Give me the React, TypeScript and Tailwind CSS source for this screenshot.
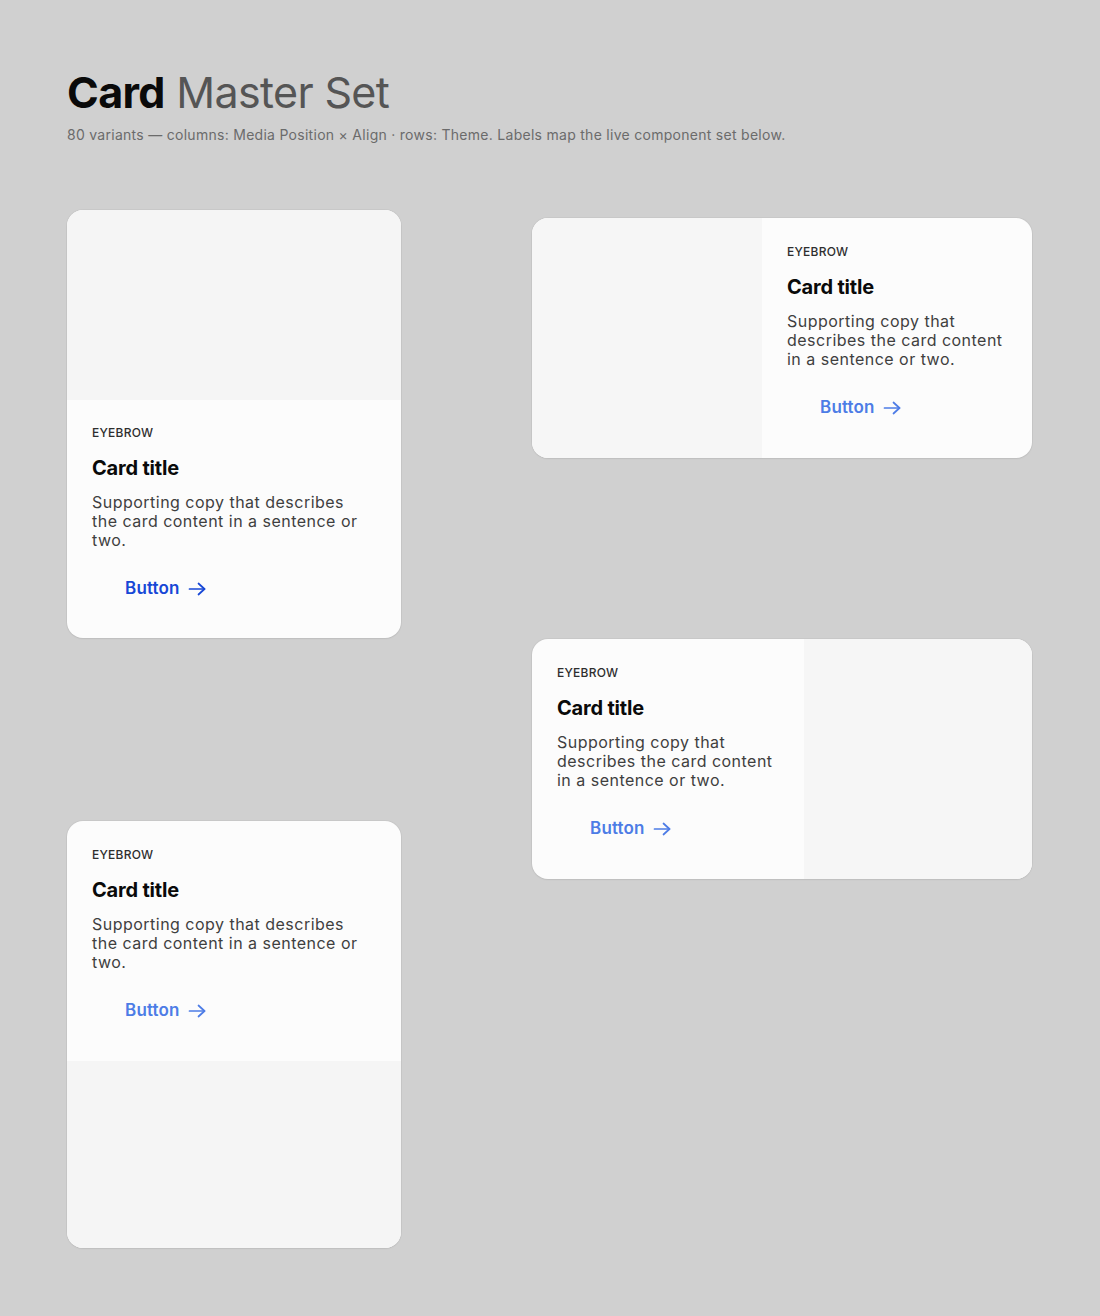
type Media = 'top' | 'bottom' | 'left' | 'right';

interface CardProps {
  media: Media;
  strong?: boolean;
}

const Arrow = () => (
  <svg width="18" height="14" viewBox="0 0 18 14" fill="none" stroke="currentColor" strokeWidth="1.7" strokeLinecap="round" strokeLinejoin="round">
    <path d="M1.5 7h15" />
    <path d="M10.5 1.5 16.5 7l-6 5.5" />
  </svg>
);

const CardBody = ({ strong }: { strong?: boolean }) => {
  return (
    <div className="flex flex-col">
      <p className="text-[12px] leading-4 font-medium tracking-[0.02em] text-[#2e2e2e]">EYEBROW</p>
      <h3 className="mt-[13px] text-[20px] leading-7 font-bold tracking-[-0.01em] text-[#0a0a0a]">
        Card title
      </h3>
      <p className="mt-[11px] text-[16px] leading-[19px] tracking-[0.03em] text-[#3f3f3f]">
        Supporting copy that describes the card content in a sentence or two.
      </p>
      <button
        className={`mt-[19px] self-start flex items-center gap-2 h-10 pl-[33px] pr-4 text-[17px] font-semibold tracking-[0.01em] ${
          strong ? 'text-[#1747d6]' : 'text-[#4d7ce6]'
        }`}
      >
        Button
        <Arrow />
      </button>
    </div>
  );
};

const Card = ({ media, strong }: CardProps) => {
  const vertical = media === 'top' || media === 'bottom';

  if (vertical) {
    return (
      <div className="flex flex-col w-[334px] rounded-2xl overflow-hidden bg-[#fcfcfc] shadow-[0_0_0_1px_rgba(0,0,0,0.035),0_1px_2px_rgba(0,0,0,0.05)]">
        {media === 'top' && <div className="h-[190px] bg-[#f5f5f5]" />}
        <div className={`pl-[25px] pr-[30px] ${media === 'top' ? 'pt-[25px] pb-[29px]' : 'pt-[26px] pb-[30px]'}`}>
          <CardBody strong={strong} />
        </div>
        {media === 'bottom' && <div className="h-[187px] bg-[#f5f5f5]" />}
      </div>
    );
  }

  return (
    <div className="flex w-[500px] h-[240px] rounded-2xl overflow-hidden bg-[#fcfcfc] shadow-[0_0_0_1px_rgba(0,0,0,0.035),0_1px_2px_rgba(0,0,0,0.05)]">
      {media === 'left' && <div className="w-[230px] bg-[#f6f6f6]" />}
      <div className="flex-1 flex flex-col justify-center px-[25px] pb-1">
        <CardBody strong={strong} />
      </div>
      {media === 'right' && <div className="w-[228px] bg-[#f6f6f6]" />}
    </div>
  );
};

const App = () => {
  return (
    <div className="min-h-[1316px] bg-[#d0d0d0] px-[67px] pt-[64px] font-['Inter',sans-serif]">
      <h1 className="text-[43px] leading-[56px] tracking-[-0.015em]">
        <span className="font-bold text-[#0a0a0a]">Card</span>{' '}
        <span className="text-[#555555]">Master Set</span>
      </h1>
      <p className="mt-[5px] text-[14px] leading-5 tracking-[0.02em] text-[#6b6b6b]">
        80 variants — columns: Media Position × Align · rows: Theme. Labels map the live component set below.
      </p>

      <div className="flex gap-[131px] mt-[65px]">
        <div className="flex flex-col gap-[183px]">
          <Card media="top" strong />
          <Card media="bottom" />
        </div>
        <div className="flex flex-col gap-[181px] pt-2">
          <Card media="left" />
          <Card media="right" />
        </div>
      </div>
    </div>
  );
};

export default App;
